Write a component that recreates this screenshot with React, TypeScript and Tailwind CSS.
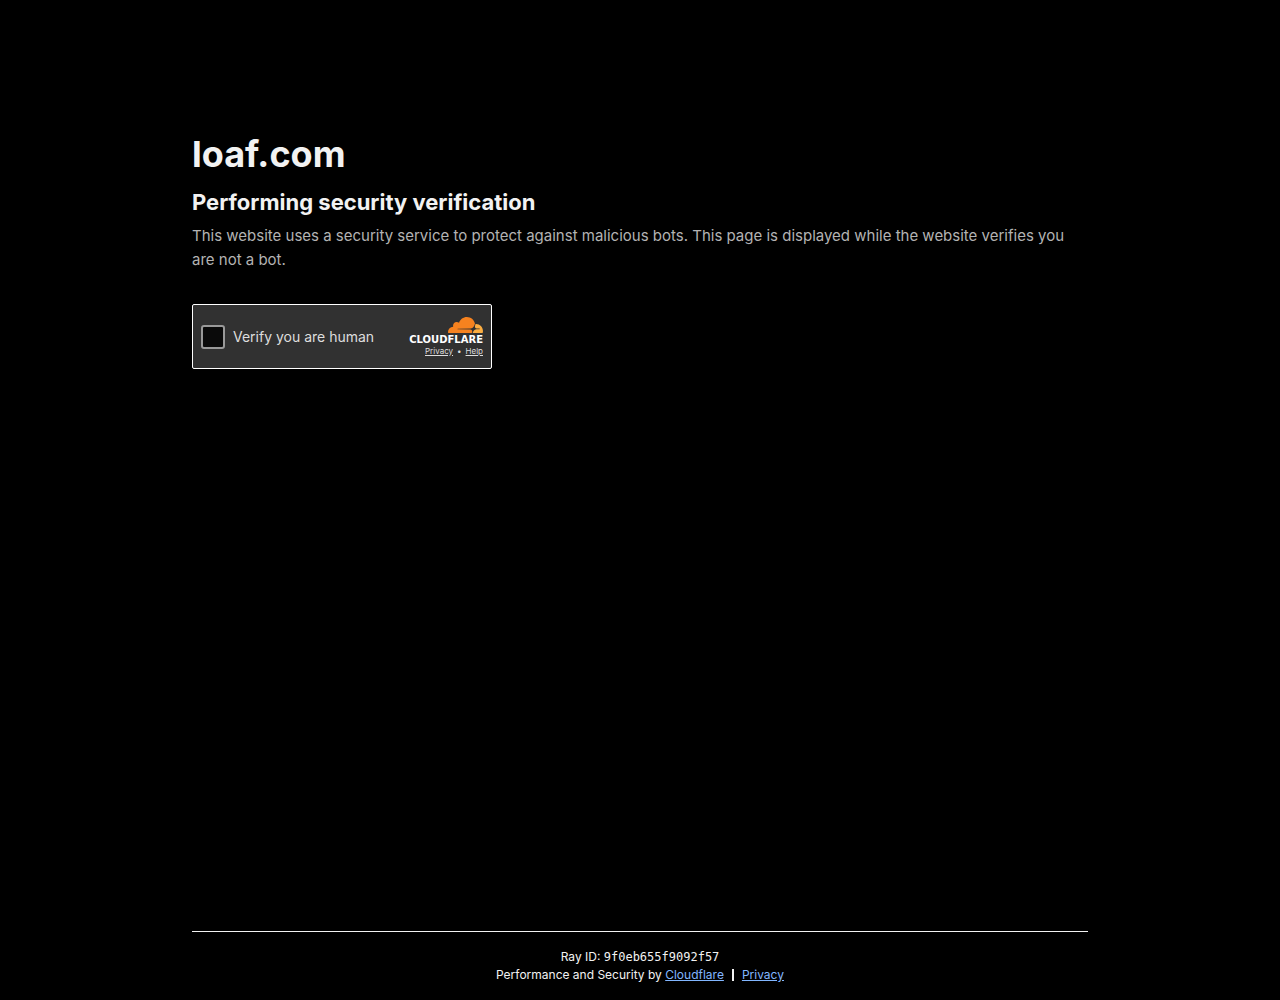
function CloudMark() {
  return (
    <svg viewBox="38 0 35 16" className="h-4 w-[35px]" aria-hidden="true">
      <path
        fill="#f6821f"
        d="M61.885 15.784l.178-.626c.213-.745.134-1.434-.223-1.94-.328-.466-.875-.741-1.539-.773l-12.581-.161a.25.25 0 0 1-.198-.107.27.27 0 0 1-.029-.23.33.33 0 0 1 .293-.227l12.697-.163c1.506-.07 3.137-1.31 3.708-2.823l.724-1.92a.46.46 0 0 0 .019-.254C64.112 2.807 60.812 0 56.865 0c-3.636 0-6.723 2.382-7.83 5.692a3.73 3.73 0 0 0-2.612-.734c-1.745.176-3.147 1.601-3.32 3.372-.044.442-.012.888.096 1.319-2.85.084-5.135 2.454-5.135 5.366 0 .26.02.52.057.777a.25.25 0 0 0 .243.215l23.225.003a.31.31 0 0 0 .296-.226z"
      />
      <path
        fill="#fbad41"
        d="M66.076 6.953c-.117 0-.233.003-.349.009a.21.21 0 0 0-.181.147l-.494 1.734c-.213.745-.134 1.434.223 1.94.328.466.875.74 1.539.772l2.682.065a.24.24 0 0 1 .19.107.27.27 0 0 1 .03.231.33.33 0 0 1-.292.227l-2.786.163c-1.513.071-3.144 1.31-3.715 2.823l-.201.534a.23.23 0 0 0 .149.305h9.587a.26.26 0 0 0 .249-.185c.172-.614.259-1.25.258-1.889-.003-3.857-3.084-6.983-6.889-6.983z"
      />
    </svg>
  );
}

function VerificationWidget() {
  return (
    <div className="flex h-[65px] w-[300px] max-w-full items-center justify-between rounded-[2px] border border-white bg-[#313131] px-2">
      <label className="flex items-center gap-2 font-['Inter',sans-serif] text-sm text-[#dedede]">
        <input
          type="checkbox"
          className="size-6 appearance-none rounded-[3px] border-2 border-[#999999] bg-[#0a0a0a] checked:bg-[#f6821f]"
        />
        Verify you are human
      </label>
      <div className="flex flex-col items-end pb-px">
        <CloudMark />
        <span className="font-['DejaVu_Sans',sans-serif] text-[10px] leading-[13px] font-bold text-white">
          CLOUDFLARE
        </span>
        <div className="flex gap-1 font-['Inter',sans-serif] text-[8px] leading-[10px] text-[#dedede]">
          <a href="#privacy" className="underline">Privacy</a>
          <span>•</span>
          <a href="#help" className="underline">Help</a>
        </div>
      </div>
    </div>
  );
}

export default function App() {
  return (
    <div className="flex min-h-screen flex-col bg-black px-6 font-['Inter',sans-serif] md:px-[15%]">
      <main className="flex-1 pt-32">
        <h1 className="text-4xl leading-[52px] font-bold text-[#f2f2f2]">loaf.com</h1>
        <h2 className="mt-2 text-[22px] leading-7 font-bold text-[#f2f2f2]">
          Performing security verification
        </h2>
        <p className="mt-2 text-[15px] leading-6 text-[#b3b3b3]">
          This website uses a security service to protect against malicious bots. This page is
          displayed while the website verifies you are not a bot.
        </p>
        <div className="mt-8">
          <VerificationWidget />
        </div>
      </main>
      <footer className="border-t border-[#f2f2f2] py-4 text-center text-xs leading-[18px] text-[#f2f2f2]">
        <div>
          Ray ID: <code className="font-['DejaVu_Sans_Mono',monospace]">9f0eb655f9092f57</code>
        </div>
        <div className="flex items-center justify-center gap-2">
          <span>
            Performance and Security by{" "}
            <a href="#cloudflare" className="text-[#82b6ff] underline">Cloudflare</a>
          </span>
          <span className="h-3 w-0.5 bg-[#f2f2f2]" />
          <a href="#privacy-policy" className="text-[#82b6ff] underline">Privacy</a>
        </div>
      </footer>
    </div>
  );
}
